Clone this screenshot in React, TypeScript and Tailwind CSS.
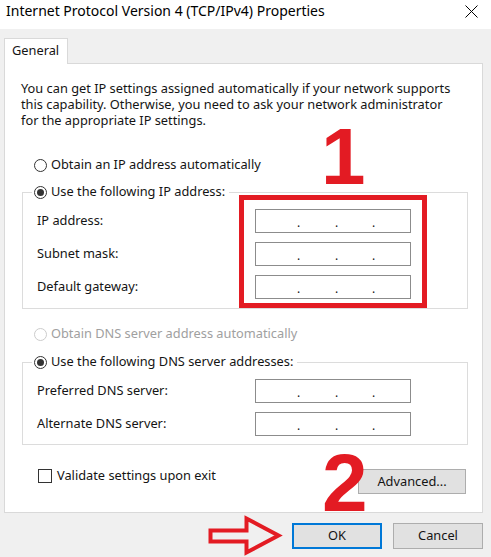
import React from "react";

function Radio({ checked, disabled }: { checked?: boolean; disabled?: boolean }) {
  return (
    <span
      className={`flex h-[13px] w-[13px] shrink-0 items-center justify-center rounded-full border bg-white ${
        disabled ? "border-[#cccccc]" : "border-[#333333]"
      }`}
    >
      {checked ? <span className="h-[7px] w-[7px] rounded-full bg-[#333333]" /> : null}
    </span>
  );
}

function IpBox() {
  return (
    <div className="flex h-[24px] w-[156px] items-center border border-[#8c8c8c] bg-white">
      <span className="w-[41px]" />
      <span className="mt-[4px] w-[3px] text-[12px] leading-none">.</span>
      <span className="w-[35px]" />
      <span className="mt-[4px] w-[3px] text-[12px] leading-none">.</span>
      <span className="w-[34px]" />
      <span className="mt-[4px] w-[3px] text-[12px] leading-none">.</span>
    </div>
  );
}

function Row({ label, className = "" }: { label: string; className?: string }) {
  return (
    <div className={`flex h-[24px] items-center ${className}`}>
      <span className="w-[232px] pl-[14px]">{label}</span>
      <IpBox />
    </div>
  );
}

export default function App() {
  return (
    <div
      className="relative h-[557px] w-[491px] overflow-hidden bg-[#f0f0f0] text-[12.8px] text-[#141414]"
      style={{ fontFamily: "'Noto Sans', 'Open Sans', sans-serif" }}
    >
      {/* Title bar */}
      <div className="flex h-[29px] items-start justify-between bg-white">
        <span className="pl-[6px] pt-[1px] text-[14px] leading-[20px] text-black">
          Internet Protocol Version 4 (TCP/IPv4) Properties
        </span>
        <svg className="mr-[13px] mt-[5px]" width="13" height="13" viewBox="0 0 13 13">
          <path d="M0.5 0.5 L12.5 12.5 M12.5 0.5 L0.5 12.5" stroke="#000" strokeWidth="1" fill="none" />
        </svg>
      </div>

      {/* Body */}
      <div className="px-[4px] pt-[9px]">
        <div className="relative z-10 -mb-px flex h-[26px] w-[64px] items-center border border-b-0 border-[#d9d9d9] bg-white pl-[7px] pb-[2px]">
          General
        </div>
        <div className="h-[450px] w-[479px] border border-[#d9d9d9] bg-white pt-[16px]">
          <p className="pl-[16px] leading-[16px]">
            You can get IP settings assigned automatically if your network supports
            <br />
            this capability. Otherwise, you need to ask your network administrator
            <br />
            for the appropriate IP settings.
          </p>

          <div className="mt-[29px] flex h-[16px] items-center gap-[4px] pl-[29px]">
            <Radio />
            <span>Obtain an IP address automatically</span>
          </div>

          <fieldset className="ml-[17px] mt-[11px] w-[446px] border border-[#dcdcdc] pb-[9px]">
            <legend className="ml-[9px] flex h-[16px] items-center gap-[4px] pl-[2px] pr-[4px]">
              <Radio checked />
              <span>Use the following IP address:</span>
            </legend>
            <div className="mt-[9px] flex flex-col gap-[9px]">
              <Row label="IP address:" />
              <Row label="Subnet mask:" />
              <Row label="Default gateway:" />
            </div>
          </fieldset>

          <div className="mt-[17px] flex h-[16px] items-center gap-[4px] pl-[29px] text-[#a0a0a0]">
            <Radio disabled />
            <span>Obtain DNS server address automatically</span>
          </div>

          <fieldset className="ml-[17px] mt-[12px] w-[446px] border border-[#dcdcdc] pb-[8px]">
            <legend className="ml-[9px] flex h-[16px] items-center gap-[4px] pl-[2px] pr-[4px]">
              <Radio checked />
              <span>Use the following DNS server addresses:</span>
            </legend>
            <div className="mt-[9px] flex flex-col gap-[9px]">
              <Row label="Preferred DNS server:" />
              <Row label="Alternate DNS server:" />
            </div>
          </fieldset>

          <div className="mt-[24px] flex items-start justify-between pl-[33px] pr-[16px]">
            <div className="flex h-[14px] items-center gap-[5px]">
              <span className="h-[14px] w-[14px] border border-[#333333] bg-white" />
              <span>Validate settings upon exit</span>
            </div>
            <button className="flex h-[25px] w-[108px] items-center justify-center border border-[#adadad] bg-[#e1e1e1]">
              Advanced...
            </button>
          </div>
        </div>
      </div>

      {/* Bottom buttons */}
      <div className="mt-[10px] flex justify-end gap-[11px] pr-[8px]">
        <button className="flex h-[26px] w-[90px] items-center justify-center border-2 border-[#0078d7] bg-[#e1e1e1]">
          OK
        </button>
        <button className="flex h-[26px] w-[90px] items-center justify-center border border-[#adadad] bg-[#e1e1e1]">
          Cancel
        </button>
      </div>

      {/* Annotations */}
      <div className="absolute left-[239px] top-[195px] h-[113px] w-[188px] border-[5px] border-[#e31b23]" />
      <div
        className="absolute left-[321px] top-[117px] text-[80px] font-bold leading-none text-[#e31b23]"
        style={{ fontFamily: "'Liberation Sans', Arial, sans-serif" }}
      >
        1
      </div>
      <div
        className="absolute left-[322px] top-[442px] text-[82px] font-bold leading-none text-[#e31b23]"
        style={{ fontFamily: "'Liberation Sans', Arial, sans-serif" }}
      >
        2
      </div>
      <svg className="absolute left-[206px] top-[514px]" width="78" height="43" viewBox="0 0 78 43">
        <path
          d="M4.5 16.5 L40.5 16.5 L40.5 4.5 L72.5 21.5 L40.5 38.5 L40.5 27.5 L4.5 27.5 Z"
          fill="none"
          stroke="#e31b23"
          strokeWidth="4"
          strokeLinejoin="miter"
        />
      </svg>
    </div>
  );
}
